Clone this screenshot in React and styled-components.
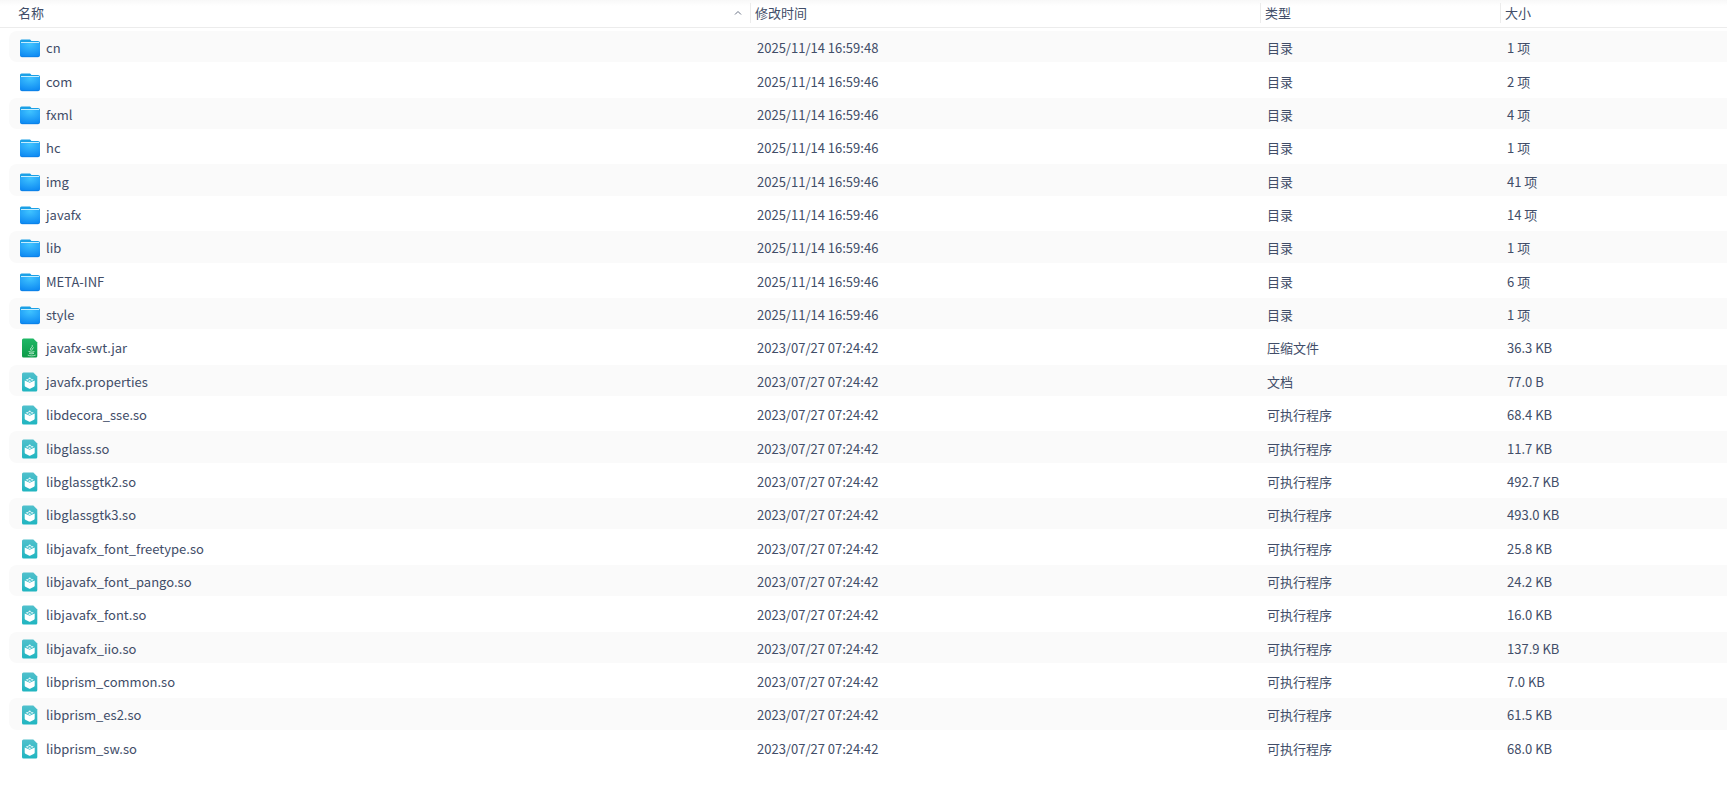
import React from "react";
import styled, { createGlobalStyle } from "styled-components";

const folders = [
  ["cn", "2025/11/14 16:59:48", "1 项"],
  ["com", "2025/11/14 16:59:46", "2 项"],
  ["fxml", "2025/11/14 16:59:46", "4 项"],
  ["hc", "2025/11/14 16:59:46", "1 项"],
  ["img", "2025/11/14 16:59:46", "41 项"],
  ["javafx", "2025/11/14 16:59:46", "14 项"],
  ["lib", "2025/11/14 16:59:46", "1 项"],
  ["META-INF", "2025/11/14 16:59:46", "6 项"],
  ["style", "2025/11/14 16:59:46", "1 项"],
].map(([name, time, size]) => ({ name, time, size, type: "目录", icon: "folder" }));

const files = [
  ["javafx-swt.jar", "压缩文件", "36.3 KB", "jar"],
  ["javafx.properties", "文档", "77.0 B"],
  ["libdecora_sse.so", "可执行程序", "68.4 KB"],
  ["libglass.so", "可执行程序", "11.7 KB"],
  ["libglassgtk2.so", "可执行程序", "492.7 KB"],
  ["libglassgtk3.so", "可执行程序", "493.0 KB"],
  ["libjavafx_font_freetype.so", "可执行程序", "25.8 KB"],
  ["libjavafx_font_pango.so", "可执行程序", "24.2 KB"],
  ["libjavafx_font.so", "可执行程序", "16.0 KB"],
  ["libjavafx_iio.so", "可执行程序", "137.9 KB"],
  ["libprism_common.so", "可执行程序", "7.0 KB"],
  ["libprism_es2.so", "可执行程序", "61.5 KB"],
  ["libprism_sw.so", "可执行程序", "68.0 KB"],
].map(([name, type, size, icon = "binary"]) => ({
  name,
  type,
  size,
  icon,
  time: "2023/07/27 07:24:42",
}));

const entries = [...folders, ...files];

const SHEET = "M3.5.5h9.8l4 4.100V18a1.500 1.500 0 0 1-1.500 1.500H3.500A1.500 1.500 0 0 1 2 18V2A1.500 1.500 0 0 1 3.500.5z";

function FolderIcon() {
  return (
    <svg width="20" height="20" viewBox="0 0 20 20" aria-hidden="true">
      <path d="M0 5V3a1.500 1.500 0 0 1 1.500-1.500h7.800c.9 0 1.300.3 1.700.9l.4.500H18a2 2 0 0 1 2 2v2H0z" fill="#1ba0e6" />
      <path d="M1 4h18v3H1z" fill="#c4edff" />
      <path d="M0 6.500A1.500 1.500 0 0 1 1.500 5h17A1.500 1.500 0 0 1 20 6.500V17a2 2 0 0 1-2 2H2a2 2 0 0 1-2-2z" fill="url(#folderFace)" />
      <path d="M.3 17.400c.2.800.9 1.400 1.700 1.400h16c.8 0 1.500-.6 1.700-1.400" fill="none" stroke="#0878dc" strokeWidth=".6" />
    </svg>
  );
}

function JarIcon() {
  return (
    <svg width="20" height="20" viewBox="0 0 20 20" aria-hidden="true">
      <path d={SHEET} fill="url(#jarFace)" />
      <g fill="none" stroke="#d9f5e3" strokeLinecap="round">
        <path d="M12.400 7.500c.8 1.700-2.300 2.300-1.900 3.700.1.500.5.800.7 1.300M13.400 9.900c-1.200.5-1.700 1.100-1 2" strokeWidth=".8" />
        <path d="M9 13.700c1.600.6 3.600.6 5 .1M9.600 15.500c1.300.4 2.700.4 3.900 0" strokeWidth=".9" />
        <path d="M8.100 17.300c2 .8 5 .8 7.300-.1" strokeWidth=".7" />
      </g>
    </svg>
  );
}

function BinaryIcon() {
  return (
    <svg width="20" height="20" viewBox="0 0 20 20" aria-hidden="true">
      <path d={SHEET} fill="url(#binaryFace)" />
      <path d="M4.700 8.500 9.700 10.700l5-2.200v5c0 .6-.2.900-.7 1.200l-3.500 1.700c-.6.3-1 .3-1.600 0l-3.500-1.700c-.5-.3-.7-.6-.7-1.200z" fill="#fff" />
      <path d="M5.600 7.800 7.400 6.900l1.700.9-1.700.9zM10.300 7.800l1.700-.9 1.800.9-1.800.9zM8 6.300l1.700-.9 1.700.9-1.700.9zM8 9.200l1.700-.9 1.700.9-1.700.9z" fill="#e4f8fa" />
    </svg>
  );
}

// Shared fills, so that every row icon points at the same gradients
function IconFills() {
  return (
    <HiddenSvg aria-hidden="true">
      <defs>
        <radialGradient id="folderFace" cx=".5" cy=".1" r=".95">
          <stop offset="0" stopColor="#3fc3ff" />
          <stop offset="1" stopColor="#0c87f2" />
        </radialGradient>
        <linearGradient id="jarFace" x1="0" y1="0" x2="0" y2="1">
          <stop offset="0" stopColor="#1fb866" />
          <stop offset="1" stopColor="#0d9a48" />
        </linearGradient>
        <linearGradient id="binaryFace" x1="0" y1="0" x2="0" y2="1">
          <stop offset="0" stopColor="#50c0cc" />
          <stop offset="1" stopColor="#20b5c0" />
        </linearGradient>
      </defs>
    </HiddenSvg>
  );
}

const icons = { folder: FolderIcon, jar: JarIcon, binary: BinaryIcon };

export default function App() {
  return (
    <>
      <GlobalStyle />
      <IconFills />
      <FileTable>
        <Head>
          <Row>
            <HeadCell $first aria-sort="ascending">
              <SortButton type="button">
                名称
                <svg width="8" height="6" viewBox="0 0 8 6" aria-hidden="true">
                  <path d="M1 4.500 4 1.500l3 3" fill="none" stroke="#6a7386" />
                </svg>
              </SortButton>
            </HeadCell>
            <HeadCell>
              <SortButton type="button">修改时间</SortButton>
            </HeadCell>
            <HeadCell>
              <SortButton type="button">类型</SortButton>
            </HeadCell>
            <HeadCell>
              <SortButton type="button">大小</SortButton>
            </HeadCell>
          </Row>
        </Head>
        <Body>
          {entries.map((entry) => {
            const Icon = icons[entry.icon];
            return (
              <FileRow key={entry.name}>
                <NameCell>
                  <Icon />
                  {entry.name}
                </NameCell>
                <Cell>{entry.time}</Cell>
                <Cell>{entry.type}</Cell>
                <Cell>{entry.size}</Cell>
              </FileRow>
            );
          })}
        </Body>
      </FileTable>
    </>
  );
}

const GlobalStyle = createGlobalStyle`
  body {
    margin: 0;
    background: #fff;
    color: #414d68;
    font-family: "Noto Sans CJK SC", sans-serif;
    font-size: 13px;
    line-height: 20px;
  }
`;

const HiddenSvg = styled.svg`
  position: absolute;
  width: 0;
  height: 0;
`;

const FileTable = styled.table`
  display: flex;
  flex-direction: column;
  box-sizing: border-box;
  min-height: 100vh;
  padding-bottom: 29px;
`;

const Head = styled.thead`
  display: block;
  background: linear-gradient(#f8f8f8, #fff 6px);
  border-bottom: 1px solid #ececec;
`;

const Body = styled.tbody`
  flex: 1;
  display: grid;
  grid-auto-rows: 1fr;
  padding-top: 2px;
`;

const Row = styled.tr`
  display: grid;
  grid-template-columns: 750fr 510fr 240fr 227fr;
`;

const HeadCell = styled.th`
  display: flex;
  padding: 3px 0 4px;
  font-weight: 400;

  button {
    padding: 0 8px 0 ${(props) => (props.$first ? "18px" : "4px")};
    border-left: ${(props) => (props.$first ? "0" : "1px solid #ececec")};
  }
`;

const SortButton = styled.button`
  flex: 1;
  display: flex;
  align-items: center;
  justify-content: space-between;
  border: 0;
  background: none;
  color: inherit;
  font: inherit;
  text-align: left;
`;

const Cell = styled.td`
  display: flex;
  align-items: center;
  margin: 1px 0;
  padding: 3px 0 0 7px;
`;

const NameCell = styled(Cell)`
  gap: 6px;
  margin-left: 9px;
  padding-left: 11px;
  border-radius: 8px 0 0 8px;
`;

const FileRow = styled(Row)`
  &:nth-child(odd) td {
    background: #fafafa;
  }
`;
